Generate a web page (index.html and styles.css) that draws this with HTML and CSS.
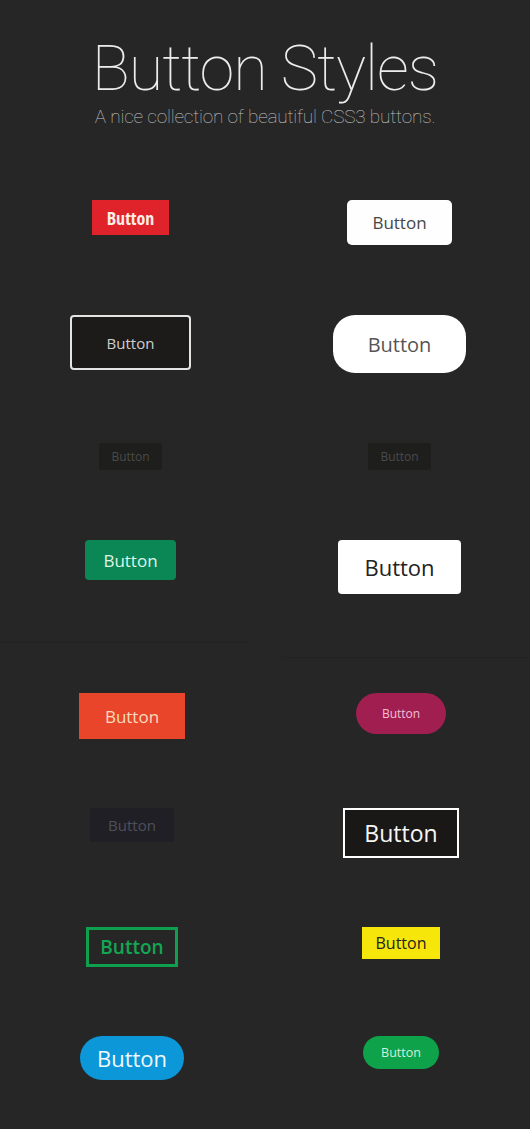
FILE: index.html
```html
<!DOCTYPE html>
<html lang="en">
<head>
<meta charset="utf-8">
<title>Button Styles</title>
<link rel="stylesheet" href="styles.css">
</head>
<body>
<header class="hero">
  <h1 class="hero-title">Button Styles</h1>
  <p class="hero-sub">A nice collection of beautiful CSS3 buttons.</p>
</header>

<section class="grid grid-top">
  <div class="cell"><a class="btn btn-red">Button</a></div>
  <div class="cell cell-right"><a class="btn btn-white">Button</a></div>
  <div class="cell"><a class="btn btn-outline-dark">Button</a></div>
  <div class="cell cell-right"><a class="btn btn-white-pill">Button</a></div>
  <div class="cell"><a class="btn btn-dim">Button</a></div>
  <div class="cell cell-right"><a class="btn btn-dim">Button</a></div>
  <div class="cell"><a class="btn btn-green">Button</a></div>
  <div class="cell cell-right"><a class="btn btn-white-big">Button</a></div>
</section>

<div class="divider">
  <span class="divider-left"></span>
  <span class="divider-right"></span>
</div>

<section class="grid grid-bottom">
  <div class="cell"><a class="btn btn-orange">Button</a></div>
  <div class="cell cell-right"><a class="btn btn-magenta">Button</a></div>
  <div class="cell"><a class="btn btn-navy">Button</a></div>
  <div class="cell cell-right"><a class="btn btn-black-border">Button</a></div>
  <div class="cell"><a class="btn btn-green-outline">Button</a></div>
  <div class="cell cell-right"><a class="btn btn-yellow">Button</a></div>
  <div class="cell"><a class="btn btn-blue-pill">Button</a></div>
  <div class="cell cell-right"><a class="btn btn-green-pill">Button</a></div>
</section>
</body>
</html>
```

FILE: styles.css
```css
html, body {
  margin: 0;
  padding: 0;
  background: #262626;
}

body {
  width: 530px;
  height: 1129px;
  overflow: hidden;
  font-family: "Open Sans", "Noto Sans", sans-serif;
}

.hero {
  padding-top: 37px;
  text-align: center;
}

.hero-title {
  margin: 0;
  font-family: Roboto, sans-serif;
  font-weight: 100;
  font-size: 63px;
  line-height: 64px;
  color: #ececec;
  letter-spacing: -1px;
}

.hero-sub {
  margin: 6px 0 0;
  font-family: Roboto, sans-serif;
  font-weight: 100;
  font-size: 19px;
  line-height: 19px;
  color: #c4c4c4;
  letter-spacing: -0.2px;
}

.grid {
  display: grid;
  align-items: start;
}

.grid-top {
  grid-template-columns: 261px 1fr;
  row-gap: 70px;
  padding-top: 74px;
}

.grid-bottom {
  grid-template-columns: 264px 1fr;
  row-gap: 69px;
  padding-top: 35px;
}

.cell {
  display: flex;
  justify-content: center;
}

.cell-right {
  padding-left: 8px;
}

.divider {
  display: flex;
  justify-content: space-between;
  height: 16px;
  margin-top: 48px;
}

.divider-left,
.divider-right {
  display: block;
  height: 1px;
  background: #222222;
}

.divider-left {
  width: 247px;
  align-self: flex-start;
}

.divider-right {
  width: 248px;
  align-self: flex-end;
}

.btn {
  display: flex;
  align-items: center;
  justify-content: center;
  box-sizing: border-box;
  text-decoration: none;
  cursor: pointer;
  white-space: nowrap;
}

.btn-red {
  width: 77px;
  height: 35px;
  background: #e0232a;
  color: #fbeee6;
  font-weight: 700;
  font-size: 18px;
  font-stretch: 75%;
}

.btn-white {
  width: 105px;
  height: 45px;
  background: #fefefe;
  border-radius: 5px;
  color: #464646;
  font-size: 17px;
}

.btn-outline-dark {
  width: 121px;
  height: 55px;
  background: #1c1b19;
  border: 2px solid #e4e4e4;
  border-radius: 4px;
  color: #cfcfcf;
  font-size: 15px;
}

.btn-white-pill {
  width: 133px;
  height: 58px;
  background: #ffffff;
  border-radius: 22px;
  color: #555555;
  font-size: 20px;
}

.btn-dim {
  width: 63px;
  height: 27px;
  background: #1e1e1c;
  border-radius: 3px;
  color: #4a4a4a;
  font-size: 12px;
}

.btn-green {
  width: 91px;
  height: 40px;
  background: #0b8756;
  border-radius: 4px;
  color: #dff3e6;
  font-size: 17px;
}

.btn-white-big {
  width: 123px;
  height: 54px;
  background: #ffffff;
  border-radius: 4px;
  color: #222222;
  font-size: 22px;
}

.btn-orange {
  width: 106px;
  height: 46px;
  background: #e8452a;
  color: #f9dcbc;
  font-size: 17px;
}

.btn-magenta {
  width: 90px;
  height: 41px;
  background: #a11f50;
  border-radius: 21px;
  color: #f3bfd5;
  font-size: 12px;
}

.btn-navy {
  width: 84px;
  height: 34px;
  background: #1f1f25;
  border-radius: 2px;
  color: #4f4f5b;
  font-size: 15px;
}

.btn-black-border {
  width: 116px;
  height: 50px;
  background: #1a1817;
  border: 2px solid #ffffff;
  color: #f6f6f6;
  font-size: 23px;
}

.btn-green-outline {
  width: 92px;
  height: 40px;
  border: 3px solid #0fa04e;
  color: #13a653;
  font-weight: 600;
  font-size: 19px;
}

.btn-yellow {
  width: 78px;
  height: 32px;
  background: #f6e60a;
  color: #262222;
  font-size: 16px;
}

.btn-blue-pill {
  width: 104px;
  height: 44px;
  background: #0b97d8;
  border-radius: 22px;
  color: #f2f9ff;
  font-size: 22px;
}

.btn-green-pill {
  width: 76px;
  height: 33px;
  background: #0ea24a;
  border-radius: 17px;
  color: #d6eede;
  font-size: 12.5px;
}
```
